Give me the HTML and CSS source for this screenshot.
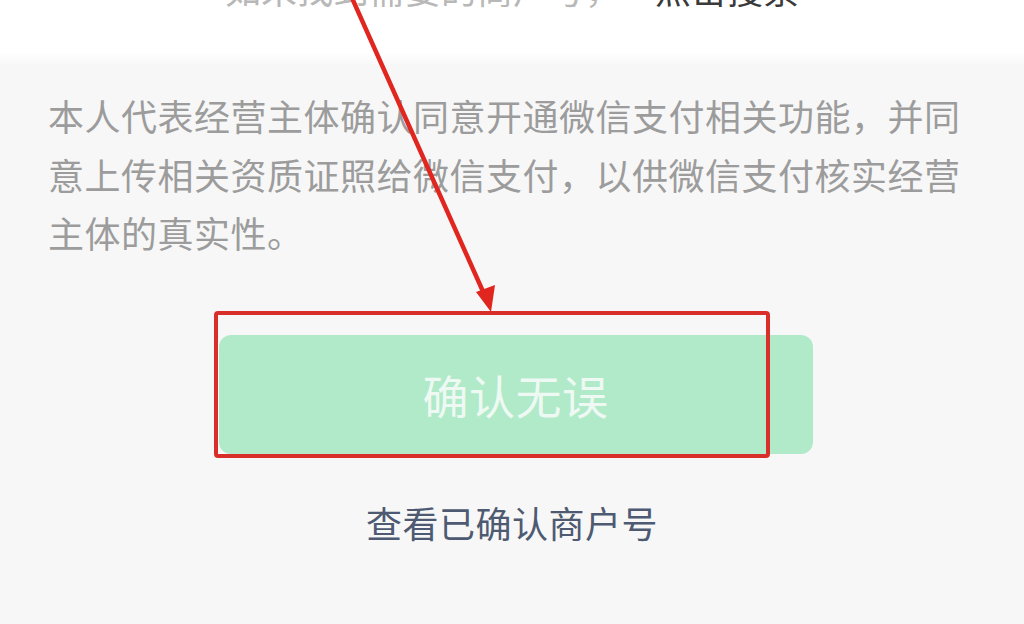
FILE: index.html
```html
<!DOCTYPE html>
<html lang="zh-CN">
<head>
<meta charset="utf-8">
<title>确认经营主体</title>
<link rel="stylesheet" href="styles.css">
</head>
<body>
<div class="page">
  <header class="top">
    <p class="hint">如未找到需要的商户号，<span class="hint-link">点击搜索</span></p>
  </header>
  <main class="content">
    <p class="agree">本人代表经营主体确认同意开通微信支付相关功能，并同意上传相关资质证照给微信支付，以供微信支付核实经营主体的真实性。</p>
    <button class="confirm">确认无误</button>
    <a class="view-link">查看已确认商户号</a>
  </main>
  <div class="mark-box"></div>
  <svg class="mark-arrow" width="1024" height="624" viewBox="0 0 1024 624">
    <line x1="352" y1="-2" x2="485" y2="296" stroke="#e0261f" stroke-width="4.5" stroke-linecap="round"/>
    <polygon points="491,312 476,292 495,285" fill="#e0261f"/>
  </svg>
</div>
</body>
</html>
```
FILE: styles.css
```css
html, body {
  margin: 0;
  padding: 0;
}
body {
  background: #f7f7f7;
  font-family: "Noto Sans CJK SC", "Noto Sans", sans-serif;
  width: 1024px;
  height: 624px;
  overflow: hidden;
}
.page {
  position: relative;
  width: 1024px;
  height: 624px;
}
.top {
  height: 64px;
  background: linear-gradient(#ffffff 0, #ffffff 52px, #f7f7f7 68px);
  overflow: hidden;
}
.hint {
  margin: -32px 0 0 225px;
  font-size: 36px;
  line-height: 40px;
  color: #b8b8b8;
  white-space: nowrap;
}
.hint-link {
  margin-left: 34px;
  color: #3a3a3a;
}
.content {
  display: flex;
  flex-direction: column;
  align-items: center;
  padding: 22px 48px 0 48px;
}
.agree {
  margin: 0;
  width: 928px;
  font-size: 36px;
  letter-spacing: 0.5px;
  line-height: 58.5px;
  color: #9c9c9c;
}
.confirm {
  margin-top: 73px;
  margin-left: 7px;
  width: 594px;
  height: 119px;
  border: none;
  border-radius: 12px;
  background: #b0eac9;
  color: #eef9f3;
  font-family: inherit;
  font-size: 46px;
  letter-spacing: 0.5px;
  padding: 0;
}
.view-link {
  margin-top: 46px;
  font-size: 36px;
  line-height: 44px;
  color: #4e5a72;
  letter-spacing: 0.5px;
}
.mark-box {
  position: absolute;
  left: 214px;
  top: 311px;
  width: 548px;
  height: 139px;
  border: 4px solid #d92f2a;
  border-radius: 4px;
}
.mark-arrow {
  position: absolute;
  left: 0;
  top: 0;
}
```
